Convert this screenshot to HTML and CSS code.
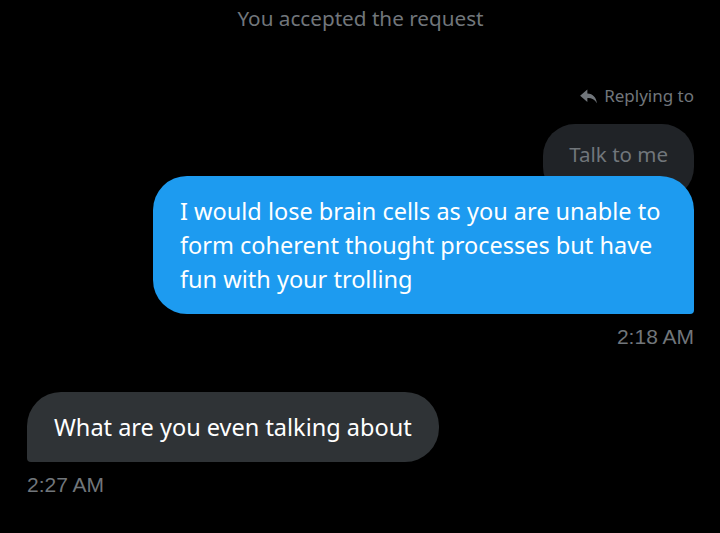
FILE: index.html
```html
<!DOCTYPE html>
<html>
<head>
<meta charset="utf-8">
<link rel="stylesheet" href="styles.css">
</head>
<body>
<main class="thread">
  <div class="notice">You accepted the request</div>

  <section class="group group-out">
    <div class="reply-label">
      <svg class="reply-icon" viewBox="0 0 20 20" width="19" height="19" aria-hidden="true">
        <path d="M8.8 2.6 L1.2 9.2 L8.8 15.8 V11.5 C13.2 11.3 16.4 12.8 18.8 17 C18.3 11.2 14.8 7.1 8.8 6.8 Z" fill="currentColor"/>
      </svg>
      <span>Replying to</span>
    </div>
    <div class="quote">Talk to me</div>
    <div class="bubble bubble-out">I would lose brain cells as you are unable to form coherent thought processes but have fun with your trolling</div>
    <div class="time">2:18 AM</div>
  </section>

  <section class="group group-in">
    <div class="bubble bubble-in">What are you even talking about</div>
    <div class="time">2:27 AM</div>
  </section>
</main>
</body>
</html>
```

FILE: styles.css
```css
html, body {
  margin: 0;
  padding: 0;
  background: #000;
}

body {
  font-family: "Noto Sans", "Open Sans", sans-serif;
  color: #e7e9ea;
  width: 720px;
  height: 533px;
  overflow: hidden;
}

.thread {
  display: flex;
  flex-direction: column;
  padding: 0 26px 0 27px;
}

.notice {
  text-align: center;
  color: #71767b;
  font-size: 20.7px;
  line-height: 24px;
  padding-top: 6px;
}

.group {
  display: flex;
  flex-direction: column;
}

.group-out {
  align-items: flex-end;
  margin-top: 55px;
}

.group-in {
  align-items: flex-start;
  margin-top: 43px;
}

.reply-label {
  display: flex;
  align-items: center;
  gap: 6px;
  color: #71767b;
  font-size: 17px;
  line-height: 22px;
}

.reply-icon {
  display: block;
}

.quote {
  margin-top: 17px;
  background: #202327;
  color: #71767b;
  font-size: 20.5px;
  line-height: 30px;
  padding: 15px 26px 30px 26px;
  border-radius: 32px;
}

.bubble {
  font-size: 23.5px;
  line-height: 34px;
  color: #fff;
  padding: 18px 27px;
  border-radius: 34px;
}

.bubble-out {
  position: relative;
  margin-top: -23px;
  background: #1d9bf0;
  width: 487px;
  border-bottom-right-radius: 4px;
}

.bubble-in {
  background: #2f3336;
  border-bottom-left-radius: 4px;
}

.time {
  color: #71767b;
  font-family: "Liberation Sans", Arial, sans-serif;
  font-size: 21px;
  line-height: 24px;
  margin-top: 11px;
}
```
